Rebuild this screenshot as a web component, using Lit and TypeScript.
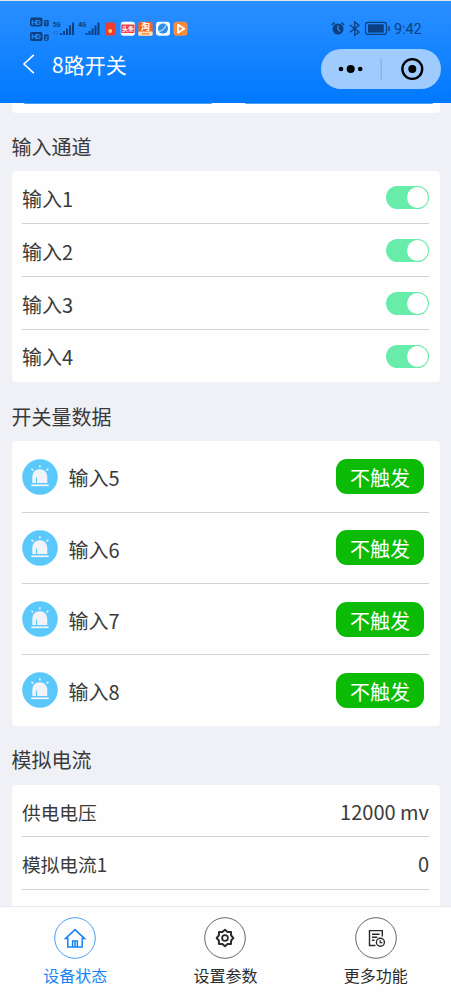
import { LitElement, html, css, svg } from "lit";
import { customElement } from "lit/decorators.js";

const siren = html`<svg class="siren" viewBox="0 0 36 36">
  <circle cx="18" cy="18" r="17.8" fill="#5ac8fa" />
  <path d="M10.3 24.1V18.5C10.3 13.2 13.4 10.3 17.7 10.3S25.3 13.2 25.3 18.5V24.1Z" fill="#f1f3f9" />
  <path d="M14.5 18.5V24.3" stroke="#5ac8fa" stroke-width="1.1" />
  <path d="M9.3 26.3H26.7" stroke="#f1f3f9" stroke-width="1.8" />
  <path d="M17.9 6.2V8.6M9.4 9.7L11.3 11.4M26.4 9.7L24.5 11.4" stroke="#eef6fd" stroke-width="1.5" />
</svg>`;

const homeIcon = svg`<path d="M11.4 21.6L21 12.6L30.6 21.6H28.2V30.1H13.8V21.6ZM18.6 30V24H23.4V30M21 24.5V30" fill="none" stroke="currentColor" stroke-width="1.5"/>`;
const gearIcon = svg`<path d="M21 12.7L23.6 14.9L27 15L27.1 18.4L29.3 21L27.1 23.6L27 27L23.6 27.1L21 29.3L18.4 27.1L15 27L14.9 23.6L12.7 21L14.9 18.4L15 15L18.4 14.9Z" fill="none" stroke="currentColor" stroke-width="2" stroke-linejoin="round"/><circle cx="21" cy="21" r="2.9" fill="none" stroke="currentColor" stroke-width="1.8"/>`;
const moreIcon = svg`<path d="M20.5 28.5H14.5V13.6H27.3V19.5M17 17.2H24.6M17 20.2H22.3M17 23.2H19.5" fill="none" stroke="currentColor" stroke-width="1.4"/><circle cx="25.4" cy="25.2" r="4" fill="none" stroke="currentColor" stroke-width="1.4"/><path d="M25.2 23V25.7H27.4" fill="none" stroke="currentColor" stroke-width="1.2"/>`;

@customElement("app-root")
export class AppRoot extends LitElement {
  static styles = css`
    :host {
      display: flex;
      flex-direction: column;
      height: 997px;
      overflow: hidden;
      background: #eff1f6;
      color: #3a3a3a;
      font-family: "Noto Sans CJK SC", sans-serif;
      font-weight: 400;
    }
    * { box-sizing: border-box; }
    svg { display: block; flex: none; }
    header {
      height: 102.5px;
      flex: none;
      border-top: 1px solid #dfe7ea;
      background: linear-gradient(#2b8fff, #0079ff);
    }
    .status {
      display: flex;
      justify-content: space-between;
      height: 48px;
    }
    .bar {
      display: flex;
      align-items: center;
      height: 40px;
      padding: 0 10.5px 0 22px;
      color: #fff;
    }
    .bar h1 {
      flex: 1;
      margin: -11px 0 0 16px;
      font-size: 21px;
      line-height: 30px;
      font-weight: inherit;
    }
    .back { margin-top: -11px; }
    main { flex: 1; min-height: 0; overflow: hidden; padding: 0 11.5px; }
    .card { background: #fefefe; border-radius: 4px; padding: 0 10.5px; }
    .peek {
      height: 10px;
      border-radius: 0 0 4px 4px;
      display: grid;
      grid-template-columns: 188px 188px;
      justify-content: space-between;
      padding: 0 7px 0 12px;
    }
    .peek i { height: 1.5px; background: #4ba3f5; border-radius: 0 0 6px 6px; }
    h2 {
      margin: 0;
      height: 58.9px;
      padding-top: 10.5px;
      line-height: 48px;
      font-size: 20px;
      font-weight: inherit;
    }
    .row {
      display: flex;
      align-items: center;
      height: 52.9px;
      padding-top: 1px;
      border-bottom: 1.5px solid #d2d2d2;
      font-size: 20px;
      line-height: 30px;
    }
    .row:last-child { border-bottom-color: transparent; height: 52.2px; }
    .label { flex: 1; padding-top: 2px; }
    .row.tall { height: 71.4px; padding: 0.4px 5px 0 0; }
    .row.tall:last-child { height: 70.3px; }
    .tall .label { padding: 3.4px 0 0 10.5px; }
    .analog .label { font-size: 18.7px; padding: 0; }
    .row.analog { height: 52.8px; padding-top: 2.5px; }
    .switch {
      width: 43px;
      height: 23px;
      padding: 1px;
      border-radius: 12px;
      background: #67ecaa;
      display: flex;
      justify-content: flex-end;
    }
    .switch i { width: 21px; height: 21px; border-radius: 50%; background: #fff; }
    .siren { width: 36px; height: 36px; }
    .tag {
      width: 88px;
      height: 35px;
      border-radius: 11px;
      background: #0bbb05;
      color: #fff;
      text-align: center;
      line-height: 37px;
    }
    .capsule {
      width: 120px;
      height: 39.5px;
      border-radius: 20px;
      background: #a0cbfe;
    }
    nav {
      flex: none;
      height: 91px;
      border-top: 1px solid #e5eaee;
      background: #fefefe;
      display: grid;
      grid-template-columns: repeat(3, 1fr);
    }
    .tab {
      display: flex;
      flex-direction: column;
      align-items: center;
      padding-top: 10px;
      font-size: 16px;
      line-height: 24px;
      gap: 4px;
      color: #2b2b2b;
    }
    .active { color: #1684f2; }
    .mono { font-family: Roboto, sans-serif; }
    .bold { font-family: Roboto, sans-serif; font-weight: 700; }
    .cjk { font-family: "Noto Sans CJK SC", sans-serif; font-weight: 700; }
  `;

  private tab(name: string, icon: unknown, active = false) {
    return html`<div class="tab ${active ? "active" : ""}">
      <svg width="42" height="42" viewBox="0 0 42 42">
        <circle cx="21" cy="21" r="20.3" fill="none" stroke=${active ? "#499ef3" : "#666"} stroke-width="1" />
        ${icon}
      </svg>
      <span>${name}</span>
    </div>`;
  }

  private bars(x: number) {
    return [0, 1, 2, 3, 4].map((i) => {
      const h = [2, 4, 6.5, 9.5, 12.5][i];
      return svg`<rect x=${x + i * 3} y=${34 - h} width="2" height=${h} fill="#0b4182"/>`;
    });
  }

  render() {
    return html`
      <header>
        <div class="status">
          <svg width="200" height="48" viewBox="0 0 200 48">
            ${[17, 31.5].map(
              (y, i) => svg`<rect x="30" y=${y - 0.5} width="12.5" height="9" rx="2" fill="#0b4182"/>
              <text class="bold" x="31.3" y=${y + 6.9} font-size="8" fill="#298bf5" textLength="9.6">HD</text>
              <rect x="44" y=${y + 2} width="4.7" height="6.3" rx="1" fill="#0b4182"/>
              <text class="bold" x="44.8" y=${y + 7.3} font-size="5.5" fill="#298bf5">${i + 1}</text>`
            )}
            <text class="bold" x="52.7" y="26" font-size="6.3" fill="#0b4182">5G</text>
            <text class="bold" x="78.2" y="26" font-size="6.3" fill="#0b4182">4G</text>
            <path d="M54.5 30V33.5M57.3 30V33.5" stroke="#1b6bc5" stroke-width="1"/>
            ${this.bars(60)}${this.bars(85.5)}
            <rect x="105.5" y="21.5" width="9.5" height="13" rx="1.5" fill="#f33b2e"/>
            <circle cx="110.3" cy="30" r="1.9" fill="#ffd36a"/>
            <rect x="120.7" y="20.7" width="14.3" height="14" rx="3" fill="#fff"/>
            <rect x="121.2" y="23.5" width="13.3" height="8.5" fill="#ee3e45"/>
            <text class="cjk" x="122" y="30.2" font-size="6" fill="#fff">头条</text>
            <rect x="138.3" y="20.7" width="14.3" height="14" rx="2.5" fill="#fb6316"/>
            <rect x="138.3" y="30.5" width="14.3" height="4.2" rx="1" fill="#fde0bd"/>
            <text class="cjk" x="141" y="29.3" font-size="9" fill="#fff">淘</text>
            <path d="M142 32.8H149" stroke="#f88b45" stroke-width="1.4"/>
            <rect x="156" y="20.7" width="14" height="14" rx="3" fill="#f5faff"/>
            <circle cx="163" cy="27.6" r="5" fill="#338ce7"/>
            <path d="M158.4 30.5Q164 30 166 24" fill="none" stroke="#a7d3fa" stroke-width="1.3"/>
            <rect x="173.5" y="20.7" width="14" height="14" rx="3.5" fill="#fb8b3b"/>
            <path d="M178 23.7L184.3 27.7L178 31.7Z" fill="none" stroke="#fff" stroke-width="1.8" stroke-linejoin="round"/>
          </svg>
          <svg width="125" height="48" viewBox="326 0 125 48">
            <g stroke="#0b4182" fill="none">
              <circle cx="338" cy="28" r="5.5" fill="#0b4182" stroke="none"/>
              <path d="M332 23.8L334.7 21.6M344 23.8L341.3 21.6" stroke-width="1.6"/>
              <path d="M338 24.8V28.3L340.2 30.3" stroke="#4c9dfd" stroke-width="1.1"/>
              <path d="M350 24L359 31.3L354.7 34.3V21L359 24.2L350 31.3" stroke-width="1.3"/>
              <rect x="365.5" y="21.4" width="21" height="12" rx="2.5" stroke-width="1.2"/>
              <rect x="368" y="23.3" width="15.8" height="8.3" fill="#0b4182" stroke="none"/>
              <path d="M389 25.3V30" stroke-width="1.5"/>
            </g>
            <text class="mono" x="394" y="32.8" font-size="14.4" fill="#0b4182" textLength="27.5">9:42</text>
          </svg>
        </div>
        <div class="bar">
          <svg class="back" width="14" height="20" viewBox="0 0 14 20">
            <path d="M11.8 .8L2 10L11.8 19.2" fill="none" stroke="#fff" stroke-width="1.6"/>
          </svg>
          <h1>8路开关</h1>
          <svg class="capsule" viewBox="0 0 120 39.5">
            <circle cx="20" cy="20" r="2.3"/><circle cx="29.7" cy="20" r="4"/><circle cx="39.2" cy="20" r="2.3"/>
            <path d="M60.2 8.5V31.5" stroke="#78adec" stroke-width="1"/>
            <circle cx="91.3" cy="20" r="9.9" fill="none" stroke="#000" stroke-width="2.4"/><circle cx="91.3" cy="20" r="4"/>
          </svg>
        </div>
      </header>
      <main>
        <div class="card peek"><i></i><i></i></div>
        <h2>输入通道</h2>
        <div class="card">
          ${[1, 2, 3, 4].map(
            (n) => html`<div class="row"><span class="label">输入${n}</span><span class="switch"><i></i></span></div>`
          )}
        </div>
        <h2>开关量数据</h2>
        <div class="card">
          ${[5, 6, 7, 8].map(
            (n) => html`<div class="row tall">${siren}<span class="label">输入${n}</span><span class="tag">不触发</span></div>`
          )}
        </div>
        <h2>模拟电流</h2>
        <div class="card">
          <div class="row analog"><span class="label">供电电压</span><span>12000 mv</span></div>
          <div class="row analog"><span class="label">模拟电流1</span><span>0</span></div>
          <div class="row analog"></div>
        </div>
      </main>
      <nav>
        ${this.tab("设备状态", homeIcon, true)} ${this.tab("设置参数", gearIcon)} ${this.tab("更多功能", moreIcon)}
      </nav>
    `;
  }
}
